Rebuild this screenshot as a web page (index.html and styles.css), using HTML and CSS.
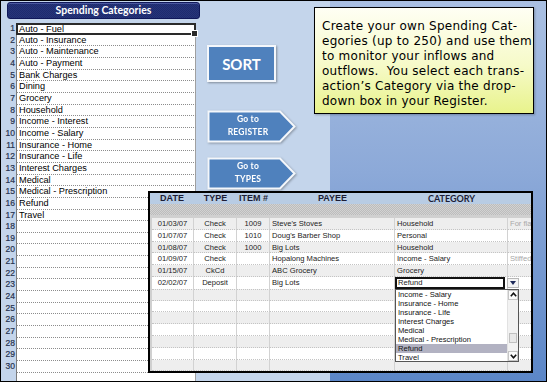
FILE: index.html
```html
<!DOCTYPE html>
<html lang="en">
<head>
    <meta charset="UTF-8">
    <title>Spending Categories</title>
    <link rel="stylesheet" href="styles.css">
</head>
<body>
    <div class="slide">
        <div class="sheet">
            <div class="sheet-title">Spending Categories</div>
            <div class="sheet-rows">
                <div class="row"><span class="num">1</span><span class="cell selected">Auto - Fuel</span></div>
                <div class="row"><span class="num">2</span><span class="cell">Auto - Insurance</span></div>
                <div class="row"><span class="num">3</span><span class="cell">Auto - Maintenance</span></div>
                <div class="row"><span class="num">4</span><span class="cell">Auto - Payment</span></div>
                <div class="row"><span class="num">5</span><span class="cell">Bank Charges</span></div>
                <div class="row"><span class="num">6</span><span class="cell">Dining</span></div>
                <div class="row"><span class="num">7</span><span class="cell">Grocery</span></div>
                <div class="row"><span class="num">8</span><span class="cell">Household</span></div>
                <div class="row"><span class="num">9</span><span class="cell">Income - Interest</span></div>
                <div class="row"><span class="num">10</span><span class="cell">Income - Salary</span></div>
                <div class="row"><span class="num">11</span><span class="cell">Insurance - Home</span></div>
                <div class="row"><span class="num">12</span><span class="cell">Insurance - Life</span></div>
                <div class="row"><span class="num">13</span><span class="cell">Interest Charges</span></div>
                <div class="row"><span class="num">14</span><span class="cell">Medical</span></div>
                <div class="row"><span class="num">15</span><span class="cell">Medical - Prescription</span></div>
                <div class="row"><span class="num">16</span><span class="cell">Refund</span></div>
                <div class="row"><span class="num">17</span><span class="cell">Travel</span></div>
                <div class="row"><span class="num">18</span><span class="cell"></span></div>
                <div class="row"><span class="num">19</span><span class="cell"></span></div>
                <div class="row"><span class="num">20</span><span class="cell"></span></div>
                <div class="row"><span class="num">21</span><span class="cell"></span></div>
                <div class="row"><span class="num">22</span><span class="cell"></span></div>
                <div class="row"><span class="num">23</span><span class="cell"></span></div>
                <div class="row"><span class="num">24</span><span class="cell"></span></div>
                <div class="row"><span class="num">25</span><span class="cell"></span></div>
                <div class="row"><span class="num">26</span><span class="cell"></span></div>
                <div class="row"><span class="num">27</span><span class="cell"></span></div>
                <div class="row"><span class="num">28</span><span class="cell"></span></div>
                <div class="row"><span class="num">29</span><span class="cell"></span></div>
                <div class="row"><span class="num">30</span><span class="cell"></span></div>
                <div class="row"><span class="num"></span><span class="cell"></span></div>
            </div>
        </div>

        <div class="actions">
            <div class="sort-btn">SORT</div>
            <div class="go-btn first">
                <svg class="go-shape" width="89" height="33" viewBox="0 0 89 33">
                    <polygon points="1.5,1.5 73,1.5 87.5,16.5 73,31.5 1.5,31.5" fill="#4f81bd" stroke="#f4f7fb" stroke-width="2"/>
                </svg>
                <div class="go-label">Go to<br>REGISTER</div>
            </div>
            <div class="go-btn">
                <svg class="go-shape" width="89" height="33" viewBox="0 0 89 33">
                    <polygon points="1.5,1.5 73,1.5 87.5,16.5 73,31.5 1.5,31.5" fill="#4f81bd" stroke="#f4f7fb" stroke-width="2"/>
                </svg>
                <div class="go-label">Go to<br>TYPES</div>
            </div>
        </div>

        <div class="backdrop"></div>

        <div class="note">
            Create your own Spending Cat-<br>
            egories (up to 250) and use them<br>
            to monitor your inflows and<br>
            outflows.&nbsp; You select each trans-<br>
            action’s Category via the drop-<br>
            down box in your Register.
        </div>

        <div class="register">
            <div class="reg-head">
                <span>DATE</span>
                <span>TYPE</span>
                <span>ITEM #</span>
                <span>PAYEE</span>
                <span class="cat-head">CATEGORY</span>
                <span></span>
            </div>
            <div class="reg-band"></div>
            <div class="reg-body">
                <div class="reg-row"><span class="c">01/03/07</span><span class="c">Check</span><span class="c">1009</span><span>Steve's Stoves</span><span>Household</span><span class="memo">For fla</span></div>
                <div class="reg-row"><span class="c">01/07/07</span><span class="c">Check</span><span class="c">1010</span><span>Doug's Barber Shop</span><span>Personal</span><span class="memo"></span></div>
                <div class="reg-row"><span class="c">01/08/07</span><span class="c">Check</span><span class="c">1000</span><span>Big Lots</span><span>Household</span><span class="memo"></span></div>
                <div class="reg-row"><span class="c">01/09/07</span><span class="c">Check</span><span class="c"></span><span>Hopalong Machines</span><span>Income - Salary</span><span class="memo">Stiffed</span></div>
                <div class="reg-row"><span class="c">01/15/07</span><span class="c">CkCd</span><span class="c"></span><span>ABC Grocery</span><span>Grocery</span><span class="memo"></span></div>
                <div class="reg-row"><span class="c">02/02/07</span><span class="c">Deposit</span><span class="c"></span><span>Big Lots</span>
                    <span class="pick">
                        <span class="pick-box">Refund</span>
                        <span class="pick-arrow"><svg width="6" height="4" viewBox="0 0 6 4"><polygon points="0,0 6,0 3,4" fill="#1e2a5a"/></svg></span>
                        <span class="pick-list">
                            <span class="opt">Income - Salary</span>
                            <span class="opt">Insurance - Home</span>
                            <span class="opt">Insurance - Life</span>
                            <span class="opt">Interest Charges</span>
                            <span class="opt">Medical</span>
                            <span class="opt">Medical - Prescription</span>
                            <span class="opt on">Refund</span>
                            <span class="opt">Travel</span>
                            <span class="scroll">
                                <span class="scroll-btn"><svg width="7" height="5" viewBox="0 0 7 5"><polyline points="0.8,4.2 3.5,1.2 6.2,4.2" fill="none" stroke="#111" stroke-width="1.6"/></svg></span>
                                <span class="scroll-thumb"></span>
                                <span class="scroll-btn down"><svg width="7" height="5" viewBox="0 0 7 5"><polyline points="0.8,0.8 3.5,3.8 6.2,0.8" fill="none" stroke="#111" stroke-width="1.6"/></svg></span>
                            </span>
                        </span>
                    </span>
                    <span class="memo"></span></div>
                <div class="reg-row"><span></span><span></span><span></span><span></span><span></span><span class="memo"></span></div>
                <div class="reg-row"><span></span><span></span><span></span><span></span><span></span><span class="memo"></span></div>
                <div class="reg-row"><span></span><span></span><span></span><span></span><span></span><span class="memo"></span></div>
                <div class="reg-row"><span></span><span></span><span></span><span></span><span></span><span class="memo"></span></div>
                <div class="reg-row"><span></span><span></span><span></span><span></span><span></span><span class="memo"></span></div>
                <div class="reg-row"><span></span><span></span><span></span><span></span><span></span><span class="memo"></span></div>
                <div class="reg-row"><span></span><span></span><span></span><span></span><span></span><span class="memo"></span></div>
            </div>
        </div>
    </div>
</body>
</html>
```

FILE: styles.css
```css
* {
    box-sizing: border-box;
}

body {
    margin: 0;
    font-family: "Liberation Sans", Arial, sans-serif;
}

.slide {
    position: relative;
    width: 547px;
    height: 382px;
    border: 1px solid #000;
    background-color: #c4d5eb;
    display: grid;
    grid-template-columns: 202px 127px 1fr;
    overflow: hidden;
}

/* spreadsheet on the left */
.sheet-title {
    margin: 1px 0 0 6px;
    width: 193px;
    height: 17px;
    border: 1px solid #10185a;
    border-radius: 3px;
    background: repeating-conic-gradient(#1e2b6e 0 25%, #263479 0 50%) 0 0 / 2px 2px;
    box-shadow: inset 0 1px 0 #4a58a0;
    color: #fff;
    font-family: Lato, "Liberation Sans", sans-serif;
    font-weight: bold;
    font-size: 10.5px;
    line-height: 15px;
    text-align: center;
}

.sheet-rows {
    margin-top: 4px;
}

.row {
    display: flex;
    height: 11.66px;
}

.num {
    width: 15px;
    padding-right: 1px;
    text-align: right;
    font-size: 8.5px;
    line-height: 11.66px;
    color: #26324f;
    -webkit-text-stroke: 0.2px #26324f;
}

.cell {
    width: 180px;
    background-color: #fff;
    border-left: 1px solid #7a7a7a;
    border-right: 1px solid #a0a0a0;
    border-bottom: 1px dotted #8c8c8c;
    padding-left: 2px;
    font-size: 9.2px;
    line-height: 10.66px;
    white-space: nowrap;
    overflow: hidden;
    color: #000;
}

.cell.selected {
    position: relative;
    overflow: visible;
    border: 2px solid #2a2a2a;
    padding-left: 1px;
    line-height: 8px;
}

.cell.selected::after {
    content: "";
    position: absolute;
    right: -4px;
    bottom: -4px;
    width: 5px;
    height: 5px;
    background-color: #2a2a2a;
    border: 1px solid #fff;
}

/* buttons in the middle */
.actions {
    display: flex;
    flex-direction: column;
    align-items: flex-start;
    padding: 44px 0 0 4px;
}

.sort-btn {
    width: 69px;
    height: 37px;
    background-color: #4f81bd;
    border: 2px solid #f4f7fb;
    box-shadow: 1px 1px 2px rgba(0, 0, 0, 0.35);
    color: #fff;
    font-family: Lato, "Liberation Sans", sans-serif;
    font-weight: bold;
    font-size: 15px;
    display: flex;
    align-items: center;
    justify-content: center;
}

.go-btn {
    position: relative;
    width: 89px;
    height: 33px;
    margin-top: 14px;
    filter: drop-shadow(1px 1px 1px rgba(0, 0, 0, 0.3));
}

.go-btn.first {
    margin-top: 28px;
}

.go-shape {
    position: absolute;
    left: 0;
    top: 0;
}

.go-label {
    position: relative;
    width: 82px;
    padding-top: 3px;
    text-align: center;
    color: #fff;
    font-family: Lato, "Liberation Sans", sans-serif;
    font-weight: bold;
    font-size: 8.5px;
    line-height: 13px;
    letter-spacing: 0.2px;
}

.backdrop {
    background: linear-gradient(180deg, #aac0e2 0%, #8ca9d8 45%, #5b86c7 100%);
}

/* yellow callout */
.note {
    position: absolute;
    left: 313px;
    top: 6px;
    width: 220px;
    height: 107px;
    border: 1px solid #000;
    background: linear-gradient(180deg, #fffff4 0%, #f6fac8 55%, #e8f38c 100%);
    box-shadow: 1px 1px 2px rgba(0, 0, 0, 0.25);
    padding: 11px 0 0 7px;
    font-family: "DejaVu Sans", Verdana, sans-serif;
    font-size: 12px;
    letter-spacing: 0.25px;
    line-height: 15px;
    white-space: nowrap;
    color: #000;
}

/* register window */
.register {
    position: absolute;
    left: 147px;
    top: 190px;
    width: 385px;
    height: 182px;
    border: 2px solid #000;
    background-color: #d0d0d0;
    overflow: hidden;
}

.reg-head {
    display: grid;
    grid-template-columns: 44px 43px 33px 125px 113px 1fr;
    height: 11px;
    background-color: #b8cce4;
    color: #1c1c34;
    font-weight: bold;
    font-size: 9px;
    line-height: 11px;
    text-align: center;
}

.cat-head {
    font-family: Lato, "Liberation Sans", sans-serif;
}

.reg-band {
    height: 11px;
    background: repeating-conic-gradient(#bcbcbc 0 25%, #d2d2d2 0 50%) 0 0 / 2px 2px;
}

.reg-body {
    padding: 3px 0 0 2px;
}

.reg-row {
    display: grid;
    grid-template-columns: 42px 43px 33px 125px 113px 1fr;
    height: 11.8px;
    background-color: #eeeeee;
    font-size: 7.6px;
    line-height: 11.5px;
    color: #222;
}

.reg-row:nth-child(even) {
    background-color: #fff;
}

.reg-row > span {
    border-right: 1px solid #d2d2d2;
    border-bottom: 1px dotted #c4c4c4;
    padding-left: 2px;
    white-space: nowrap;
    overflow: hidden;
}

.reg-row > .c {
    text-align: center;
    padding-left: 0;
}

.reg-row > .memo {
    color: #a8a8a8;
    border-right: none;
}

/* category drop-down */
.reg-row > .pick {
    position: relative;
    overflow: visible;
    padding-left: 0;
}

.pick-box {
    display: block;
    width: 110px;
    height: 12px;
    border: 2px solid #111;
    background-color: #fff;
    padding-left: 1px;
    line-height: 8px;
}

.pick-arrow {
    position: absolute;
    left: 112px;
    top: 1px;
    width: 12px;
    height: 10px;
    background-color: #f4f4f4;
    border: 1px solid #b8b8b8;
    display: flex;
    align-items: center;
    justify-content: center;
}

.pick-list {
    position: absolute;
    left: 0;
    top: 12px;
    width: 124px;
    height: 73px;
    border: 1px solid #555;
    background-color: #fff;
    z-index: 2;
}

.opt {
    display: block;
    height: 9px;
    padding-left: 2px;
    font-size: 7.6px;
    line-height: 9px;
    color: #111;
}

.opt.on {
    background-color: #b2b2c2;
}

.scroll {
    position: absolute;
    right: 0;
    top: 0;
    bottom: 0;
    width: 11px;
    background-color: #f2f2f2;
    border-left: 1px solid #e2e2e2;
    display: flex;
    flex-direction: column;
}

.scroll-btn {
    height: 10px;
    border: 1px solid #c6c6c6;
    background-color: #fbfbfb;
    display: flex;
    align-items: center;
    justify-content: center;
}

.scroll-thumb {
    height: 11px;
    margin: 33px 1px 8px;
    border: 1px solid #c0c0c0;
    background-color: #e8e8e8;
}
```
